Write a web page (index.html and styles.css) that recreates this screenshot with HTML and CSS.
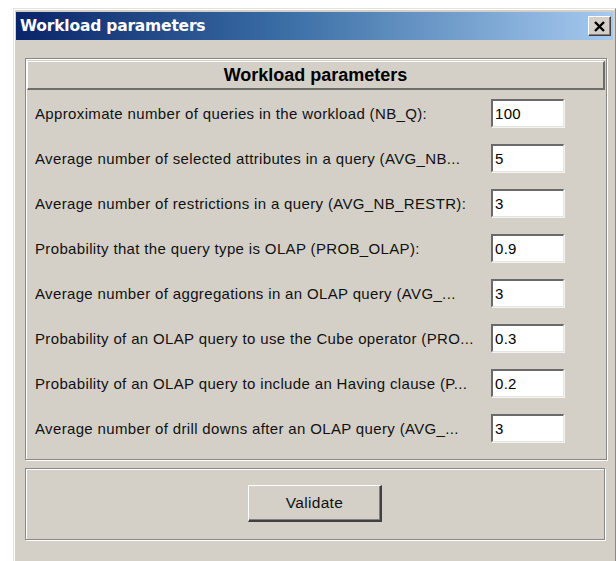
FILE: index.html
```html
<!DOCTYPE html>
<html>
<head>
<meta charset="utf-8">
<title>Workload parameters</title>
<link rel="stylesheet" href="styles.css">
</head>
<body>
<div class="window">
  <div class="titlebar">
    <span class="title">Workload parameters</span>
    <span class="close">
      <svg width="13" height="11" viewBox="0 0 13 11"><path d="M2 1 L11 10 M11 1 L2 10" stroke="#000" stroke-width="2.4" fill="none"/></svg>
    </span>
  </div>
  <div class="content">
    <div class="panel params">
      <div class="header">Workload parameters</div>
      <div class="rows">
        <div class="row"><span class="label">Approximate number of queries in the workload (NB_Q):</span><span class="field">100</span></div>
        <div class="row"><span class="label">Average number of selected attributes in a query (AVG_NB...</span><span class="field">5</span></div>
        <div class="row"><span class="label">Average number of restrictions in a query (AVG_NB_RESTR):</span><span class="field">3</span></div>
        <div class="row"><span class="label">Probability that the query type is OLAP (PROB_OLAP):</span><span class="field">0.9</span></div>
        <div class="row"><span class="label">Average number of aggregations in an OLAP query (AVG_...</span><span class="field">3</span></div>
        <div class="row"><span class="label">Probability of an OLAP query to use the Cube operator (PRO...</span><span class="field">0.3</span></div>
        <div class="row"><span class="label">Probability of an OLAP query to include an Having clause (P...</span><span class="field">0.2</span></div>
        <div class="row"><span class="label">Average number of drill downs after an OLAP query (AVG_...</span><span class="field">3</span></div>
      </div>
    </div>
    <div class="panel actions">
      <button class="btn">Validate</button>
    </div>
  </div>
</div>
</body>
</html>
```
FILE: styles.css
```css
html, body {
  margin: 0;
  padding: 0;
  background: #fff;
  overflow: hidden;
}

.window {
  margin: 8px 0 0 13px;
  width: 603px;
  height: 570px;
  background: #d4d0c8;
  border-left: 1px solid #e4e2dd;
  border-top: 1px solid #e4e2dd;
  border-right: 1px solid #8c8a86;
  box-shadow: inset 1px 1px 0 #fff;
  padding: 3px 2px 0 2px;
  box-sizing: border-box;
}

.titlebar {
  height: 28px;
  background: linear-gradient(to right, #0a246a 0%, #3a6ea5 45%, #a6caf0 100%);
  display: flex;
  align-items: center;
  justify-content: space-between;
  padding: 0 2px 0 4px;
}

.title {
  color: #fff;
  font-family: "DejaVu Sans", sans-serif;
  font-weight: bold;
  font-size: 15.5px;
  letter-spacing: -0.2px;
}

.close {
  width: 23px;
  height: 20px;
  box-sizing: border-box;
  background: #d4d0c8;
  border-top: 1px solid #fff;
  border-left: 1px solid #fff;
  border-right: 1px solid #404040;
  border-bottom: 1px solid #404040;
  box-shadow: inset -1px -1px 0 #808080;
  display: flex;
  align-items: center;
  justify-content: center;
}

.content {
  padding: 18px 6px 0 9px;
}

.panel {
  border: 1px solid #8a8884;
  box-shadow: inset 1px 1px 0 #fff, 1px 1px 0 #fff;
  width: 578px;
  box-sizing: content-box;
}

.params {
  padding: 2px 1px 0 1px;
  height: 398px;
}

.header {
  height: 29px;
  box-sizing: border-box;
  border-top: 1px solid #fff;
  border-left: 1px solid #fff;
  border-right: 2px solid #6f6d6a;
  border-bottom: 2px solid #6f6d6a;
  display: flex;
  align-items: center;
  justify-content: center;
  font-family: "Liberation Sans", Arial, sans-serif;
  font-weight: bold;
  font-size: 18px;
  color: #000;
}

.rows {
  display: flex;
  flex-direction: column;
  gap: 17px;
  padding: 9px 0 0 8px;
}

.row {
  display: grid;
  grid-template-columns: 456px 73px;
  align-items: center;
  height: 28px;
}

.label {
  font-family: "Liberation Sans", Arial, sans-serif;
  font-size: 15px;
  letter-spacing: 0.35px;
  color: #111;
  white-space: nowrap;
  overflow: hidden;
}

.field {
  height: 28px;
  box-sizing: border-box;
  background: #fff;
  border-top: 2px solid #6a6a6a;
  border-left: 2px solid #6a6a6a;
  border-right: 1px solid #e6e4df;
  border-bottom: 1px solid #e6e4df;
  box-shadow: 1px 1px 0 #f4f3f0;
  font-family: "Liberation Sans", Arial, sans-serif;
  font-size: 15px;
  letter-spacing: 0.3px;
  padding: 4px 0 0 2px;
  color: #000;
}

.actions {
  margin-top: 8px;
  height: 70px;
  display: flex;
  justify-content: center;
  align-items: flex-start;
}

.btn {
  margin-top: 16px;
  width: 134px;
  height: 37px;
  background: #d4d0c8;
  border-top: 1px solid #fff;
  border-left: 1px solid #fff;
  border-right: 2px solid #404040;
  border-bottom: 2px solid #404040;
  box-shadow: inset -1px -1px 0 #808080;
  font-family: "Liberation Sans", Arial, sans-serif;
  font-size: 15.5px;
  letter-spacing: 0.3px;
  color: #111;
  padding: 0;
}
```
